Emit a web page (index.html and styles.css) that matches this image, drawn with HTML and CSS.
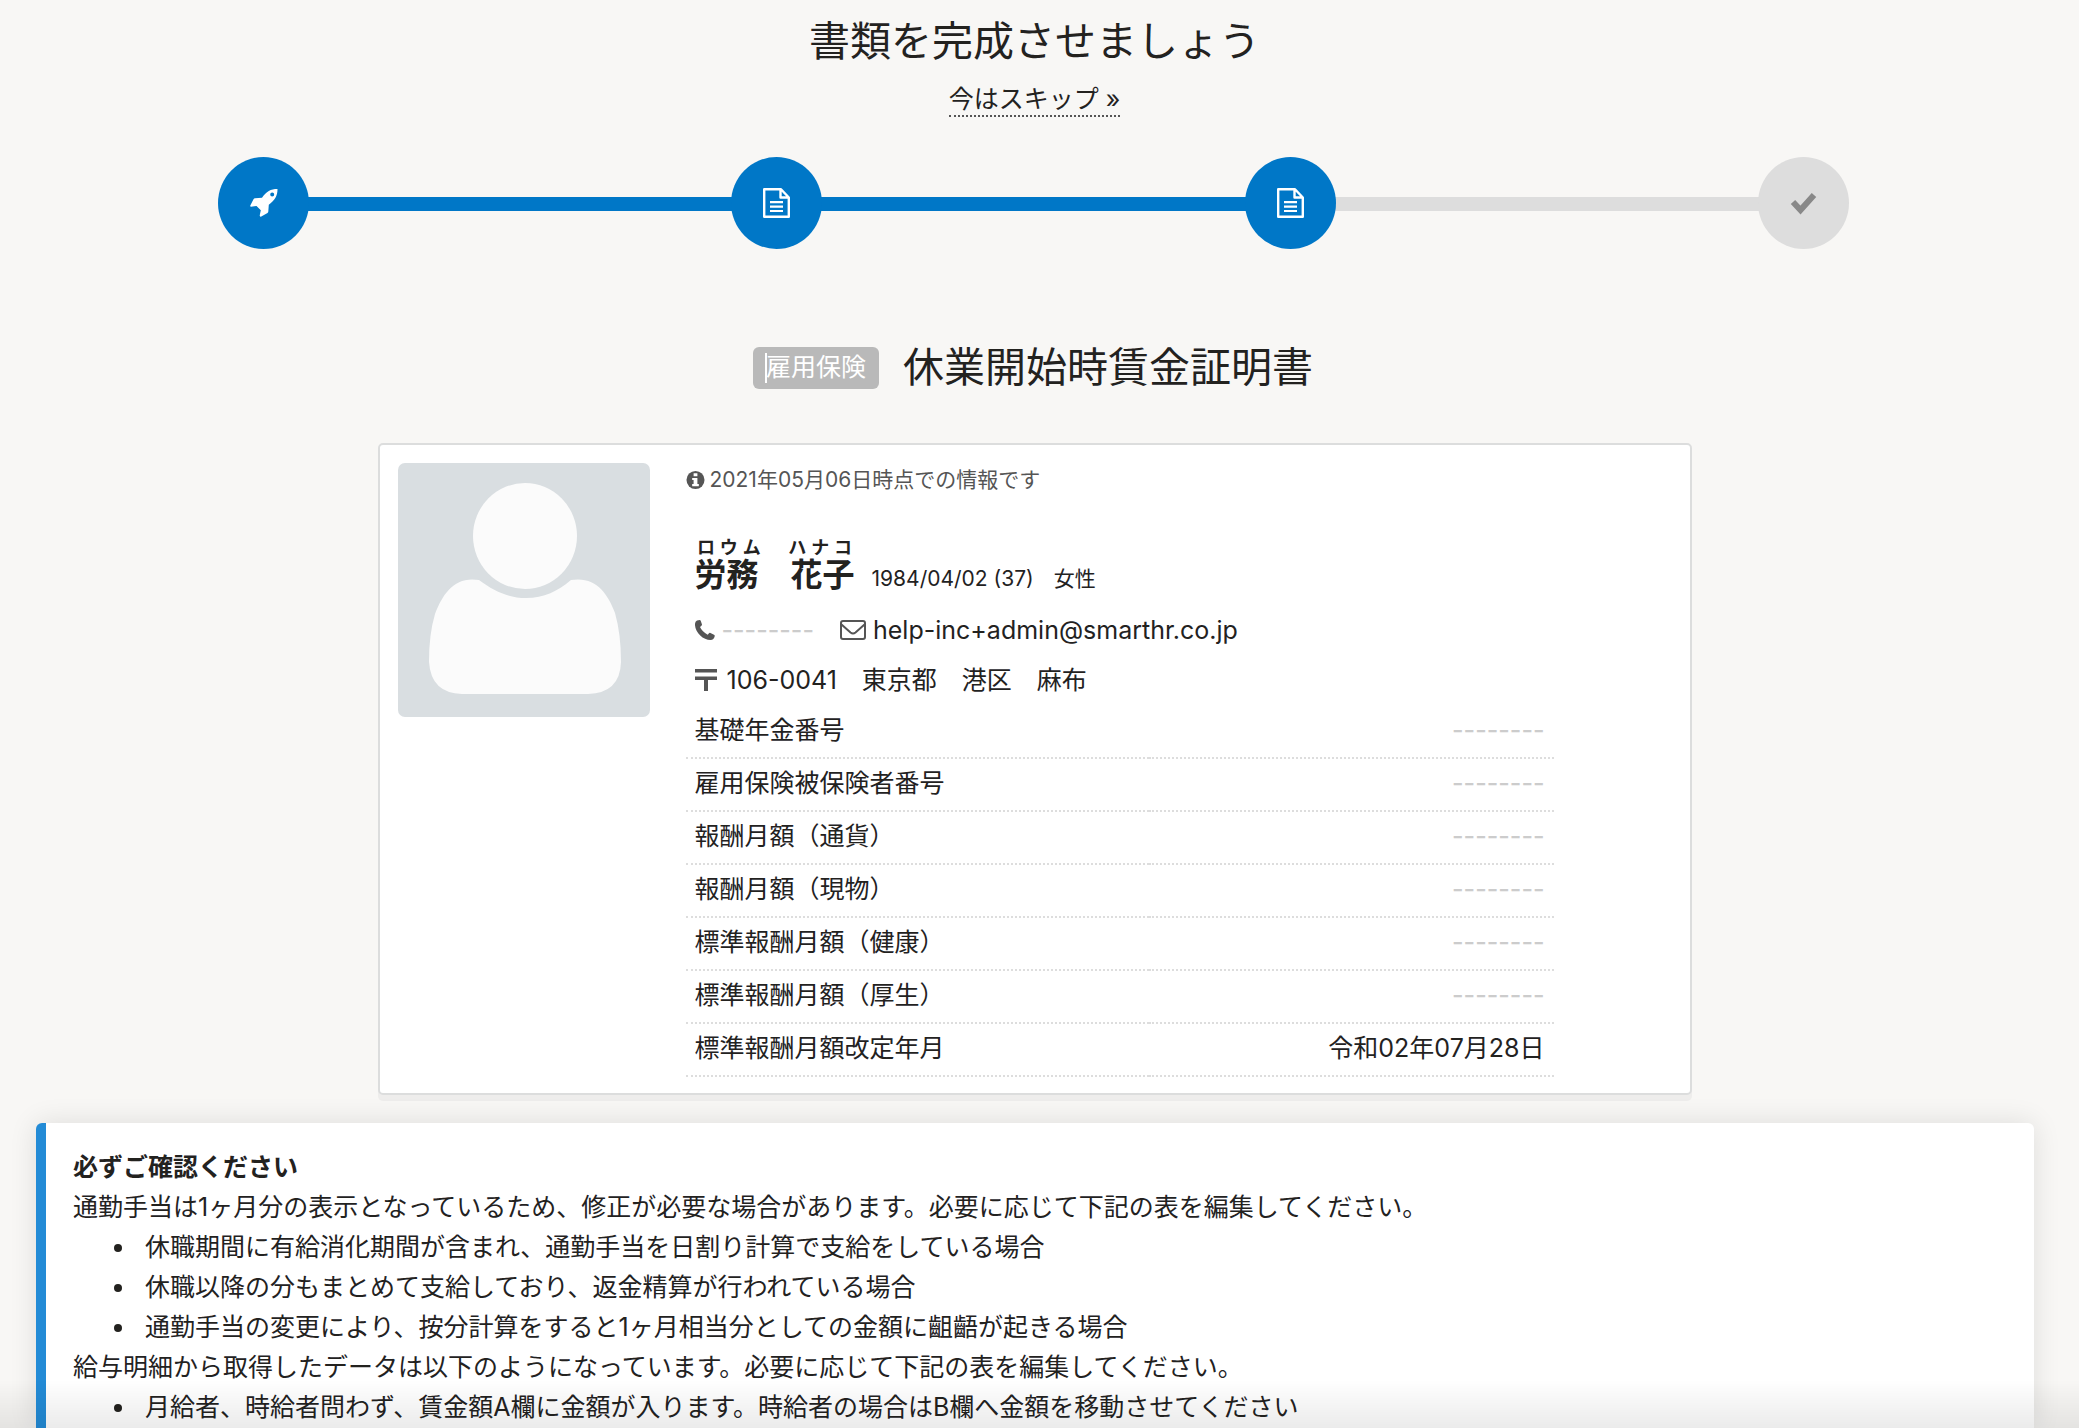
FILE: index.html
```html
<!DOCTYPE html>
<html lang="ja">
<head>
<meta charset="utf-8">
<meta name="viewport" content="width=device-width, initial-scale=1">
<title>休業開始時賃金証明書</title>
<link rel="stylesheet" href="styles.css">
</head>
<body>
<svg class="defs" aria-hidden="true">
  <symbol id="icon-doc" viewBox="0 0 27 30">
    <path d="M1.200 1.200h16.800l7.800 8.300v19.300H1.200zM17.500 1.200v8.300h8.300" fill="none" stroke="currentColor" stroke-width="2.400" stroke-linejoin="round"/>
    <path d="M7 14.200h13M7 18.600h13M7 23h13" stroke="currentColor" stroke-width="2.200"/>
  </symbol>
</svg>
<header class="intro">
  <h1 class="intro-title">書類を完成させましょう</h1>
  <a class="skip" href="#documents">今はスキップ »</a>
</header>
<ol class="steps">
  <li class="step step-done">
    <svg class="rocket" viewBox="0 0 28 28" role="img" aria-label="開始"><path fill="currentColor" fill-rule="evenodd" d="M27.500 0C20.500 0 16.500 2.500 12 8.700L5 9.200Q4 9.400 3.500 10.200L.3 16.500Q0 17.500 1 17.700L6.500 17L10.800 21.200L9.700 26.500Q10 28 11.300 27.600L17.500 24Q18.300 23.400 18.300 22.500L18.800 15.800C25 11 27.500 7 27.500 0ZM22.200 3.500a2 2 0 1 1 0 4 2 2 0 0 1 0-4Z"/></svg>
  </li>
  <li class="bar bar-done" aria-hidden="true"></li>
  <li class="step step-done"><svg class="doc" role="img" aria-label="書類"><use href="#icon-doc"/></svg></li>
  <li class="bar bar-done" aria-hidden="true"></li>
  <li class="step step-done"><svg class="doc" role="img" aria-label="書類"><use href="#icon-doc"/></svg></li>
  <li class="bar" aria-hidden="true"></li>
  <li class="step"><svg class="check" viewBox="0 0 27 24" role="img" aria-label="完了"><path d="M3 11L10.500 19L24 4" fill="none" stroke="currentColor" stroke-width="6" stroke-linejoin="miter"/></svg></li>
</ol>
<main id="documents" class="main">
  <div class="doc-head">
    <span class="badge">雇用保険</span>
    <h2 class="doc-title">休業開始時賃金証明書</h2>
  </div>
  <section class="card">
    <svg class="avatar" viewBox="0 0 252 254" role="img" aria-label="プロフィール画像">
      <rect width="252" height="254" fill="#d9dee1"/>
      <ellipse cx="127" cy="73" rx="52" ry="53" fill="#fbfbfb"/>
      <path fill="#fbfbfb" d="M81 117C96 128 110 135 128 135S160 128 173 117C198 113 210 131 217 150Q223 171 223 199Q222 230 190 231H64Q33 230 31 199Q31 171 37 151C45 130 57 113 81 117Z"/>
    </svg>
    <div class="profile">
      <p class="asof"><svg class="info" viewBox="0 0 20 20" aria-hidden="true"><circle cx="10" cy="10" r="9.500" fill="currentColor"/><path fill="#fff" d="M8 3h4v3H8zM6.500 8H12v6.300h1.500V16.500h-7v-2.200H8V10H6.500z"/></svg>2021年05月06日時点での情報です</p>
      <div class="person">
        <ruby class="name">労務　花子<rt>ロウム　ハナコ</rt></ruby>
        <span class="birth">1984/04/02 (37)</span>
        <span class="sex">女性</span>
      </div>
      <div class="contact">
        <svg class="phone" viewBox="0 0 20 20" aria-hidden="true"><path fill="currentColor" d="M2 .5 4.800 0Q5.400 0 5.800 1L7 4.500Q7 5.300 6.200 5.900L5 7Q7 11.500 12.700 14.700L14.200 13.100Q14.800 12.600 15.500 12.900L19 14.800Q20 15.300 19.700 16.200Q19 19.700 15.500 20C8 20-.5 12 0 3.800Q.2 1.500 2 .5Z"/></svg>
        <span class="empty">--------</span>
        <svg class="mail" viewBox="0 0 26 20" aria-hidden="true"><rect x="1" y="1" width="24" height="18" rx="2" fill="none" stroke="currentColor" stroke-width="2"/><path d="M1.500 4.500 10.500 12.500Q13 14.500 15.500 12.500L24.500 4.500" fill="none" stroke="currentColor" stroke-width="2"/></svg>
        <a class="email" href="mailto:help-inc+admin@smarthr.co.jp">help-inc+admin@smarthr.co.jp</a>
      </div>
      <div class="address">
        <svg class="postal" viewBox="0 0 22 22" aria-hidden="true"><path fill="currentColor" d="M0 0h22v3.500H0zM0 7.500h22V11H13v11H9V11H0z"/></svg>
        <span>106-0041　東京都　港区　麻布</span>
      </div>
      <table class="facts">
        <tr><th scope="row">基礎年金番号</th><td class="empty">--------</td></tr>
        <tr><th scope="row">雇用保険被保険者番号</th><td class="empty">--------</td></tr>
        <tr><th scope="row">報酬月額（通貨）</th><td class="empty">--------</td></tr>
        <tr><th scope="row">報酬月額（現物）</th><td class="empty">--------</td></tr>
        <tr><th scope="row">標準報酬月額（健康）</th><td class="empty">--------</td></tr>
        <tr><th scope="row">標準報酬月額（厚生）</th><td class="empty">--------</td></tr>
        <tr><th scope="row">標準報酬月額改定年月</th><td>令和02年07月28日</td></tr>
      </table>
    </div>
  </section>
  <section class="notice">
    <h3 class="notice-title">必ずご確認ください</h3>
    <p>通勤手当は1ヶ月分の表示となっているため、修正が必要な場合があります。必要に応じて下記の表を編集してください。</p>
    <ul>
      <li>休職期間に有給消化期間が含まれ、通勤手当を日割り計算で支給をしている場合</li>
      <li>休職以降の分もまとめて支給しており、返金精算が行われている場合</li>
      <li>通勤手当の変更により、按分計算をすると1ヶ月相当分としての金額に齟齬が起きる場合</li>
    </ul>
    <p>給与明細から取得したデータは以下のようになっています。必要に応じて下記の表を編集してください。</p>
    <ul>
      <li>月給者、時給者問わず、賃金額A欄に金額が入ります。時給者の場合はB欄へ金額を移動させてください</li>
    </ul>
  </section>
</main>
<div class="fade" aria-hidden="true"></div>
</body>
</html>
```
FILE: styles.css
```css
* { box-sizing: border-box; }

body {
  margin: 0;
  min-height: 100vh;
  display: flex;
  flex-direction: column;
  padding-right: 10px;
  background: #f8f7f5;
  color: #23221f;
  font: 25px/40px Inter, "Noto Sans CJK JP", sans-serif;
}

h1, h2, h3, p, ul, ol { margin: 0; padding: 0; font-weight: 400; }

.defs { position: absolute; width: 0; height: 0; }

.intro {
  display: flex;
  flex-direction: column;
  align-items: center;
  gap: 16px;
  padding-top: 11px;
}
.intro-title, .doc-title { font-size: 41px; line-height: 60px; }
.skip {
  color: inherit;
  text-decoration: none;
  line-height: 24px;
  height: 30px;
  border-bottom: 2px dotted #555;
}

.steps {
  display: flex;
  align-items: center;
  list-style: none;
  margin: 40px 220px 0 218px;
}
.step {
  position: relative;
  z-index: 1;
  display: flex;
  align-items: center;
  justify-content: center;
  flex: none;
  width: 91px;
  height: 92px;
  border-radius: 50%;
  background: #ddd;
  color: #888;
}
.step-done { background: #0077c7; color: #fff; }
.bar { flex: 1; height: 14px; margin: 2px -2px 0; background: #ddd; }
.bar-done { background: #0077c7; }
.rocket { width: 28px; height: 28px; }
.doc { width: 27px; height: 30px; }
.check { width: 27px; height: 24px; }

.main { display: flex; flex-direction: column; flex: 1; }
.doc-head {
  display: flex;
  align-items: center;
  justify-content: center;
  gap: 24px;
  padding-right: 3px;
  margin: 88px 0 46px;
}
.badge {
  position: relative;
  margin-top: 1px;
  padding: 0 13px;
  height: 42px;
  line-height: 40px;
  border-radius: 6px;
  background: #b9b9b9;
  color: #fff;
}
.badge::before {
  content: "";
  position: absolute;
  left: 12px;
  top: 6px;
  width: 2px;
  height: 30px;
  background: #fff;
}

.card {
  display: flex;
  align-items: flex-start;
  gap: 36px;
  width: 1314px;
  max-width: 100%;
  margin: 0 auto;
  padding: 18px 18px 16px;
  background: #fff;
  border: 2px solid #dcdddd;
  border-radius: 5px;
  box-shadow: 0 6px 0 #eeedec;
}
.avatar { flex: none; width: 252px; height: 254px; border-radius: 7px; }
.profile { width: 868px; }
.asof {
  display: flex;
  align-items: center;
  gap: 5px;
  font-size: 21px;
  line-height: 34px;
  color: #555;
}
.info { width: 19px; height: 20px; }
.person { display: flex; align-items: baseline; margin-top: 41px; padding-left: 9px; font-size: 21px; }
.name { font-size: 32px; line-height: 40px; font-weight: 700; }
.name rt { font-size: 18px; line-height: 22px; font-weight: 700; }
.birth { margin-left: 17px; }
.sex { margin-left: 20px; }
.contact, .address { display: flex; align-items: center; height: 50px; padding-left: 9px; }
.contact { margin-top: 6px; }
.phone, .mail, .postal { flex: none; color: #555; }
.phone { width: 20px; height: 20px; margin-right: 7px; }
.mail { width: 26px; height: 20px; margin: 0 7px 0 26px; }
.postal { width: 22px; height: 22px; margin-right: 10px; }
.empty { color: #ccc; font-weight: 500; }
.email { color: inherit; text-decoration: none; }

.facts { width: 100%; border-collapse: collapse; }
.facts th, .facts td {
  height: 53px;
  padding: 0 9px 3px;
  border-bottom: 2px dotted #ddd;
  font-weight: 400;
  text-align: left;
}
.facts td { text-align: right; }
.facts td.empty { font-weight: 500; }

.notice {
  flex: 1;
  margin: 28px 35px 0 36px;
  padding: 24px 27px 0;
  border-left: 10px solid #238bd6;
  border-radius: 6px 6px 0 0;
  background: #fff;
  box-shadow: 0 0 28px rgba(0, 0, 0, .11);
}
.notice-title { font-size: 25px; font-weight: 700; }
.notice ul { padding-left: 41px; list-style: none; }
.notice li { display: flex; align-items: flex-start; }
.notice li::before {
  content: "";
  flex: none;
  width: 8px;
  height: 8px;
  margin: 17px 23px 0 0;
  border-radius: 50%;
  background: currentColor;
}

.fade {
  position: fixed;
  inset: auto 0 0;
  height: 48px;
  background: linear-gradient(rgba(0, 0, 0, 0), rgba(0, 0, 0, .08));
  pointer-events: none;
}
```
